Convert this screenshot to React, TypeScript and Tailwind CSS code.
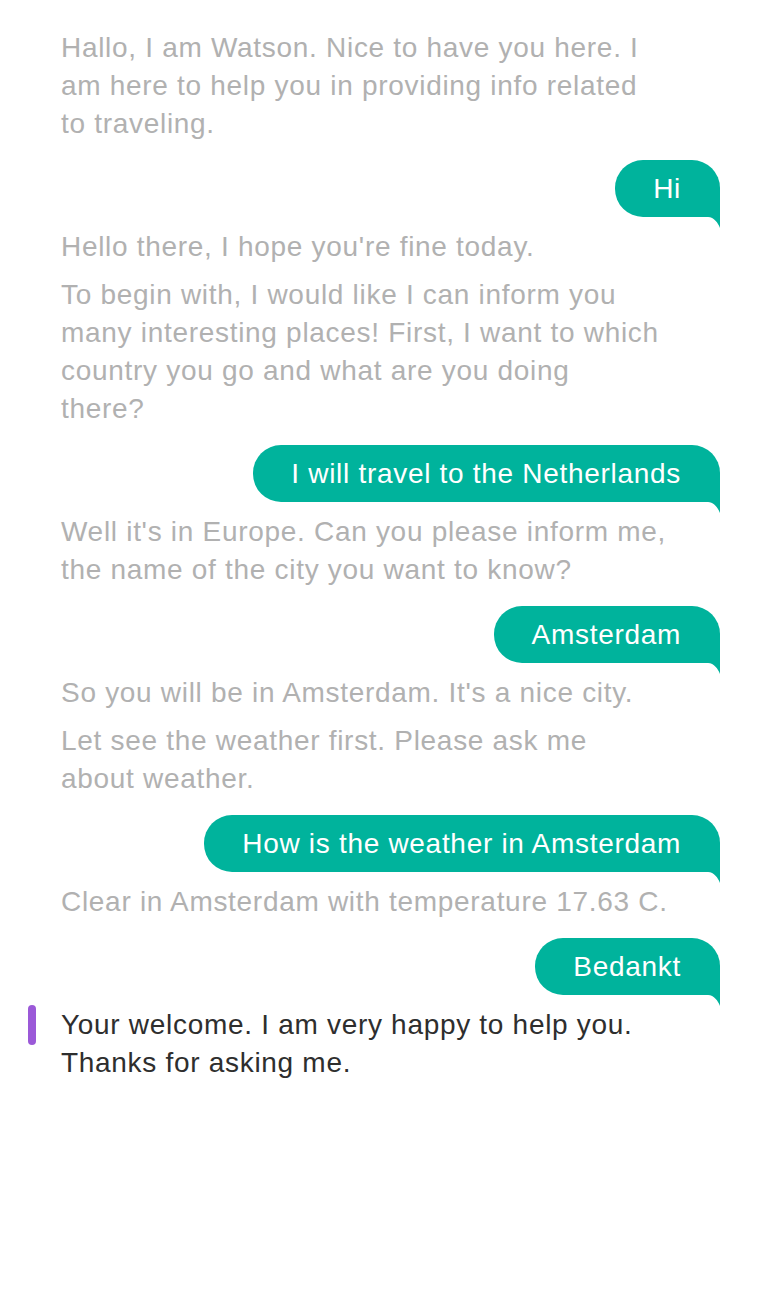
import * as React from "react";

type Msg = { from: "bot" | "user"; lines: string[]; active?: boolean };

const messages: Msg[] = [
  { from: "bot", lines: ["Hallo, I am Watson. Nice to have you here. I", "am here to help you in providing info related", "to traveling."] },
  { from: "user", lines: ["Hi"] },
  { from: "bot", lines: ["Hello there, I hope you're fine today."] },
  { from: "bot", lines: ["To begin with, I would like I can inform you", "many interesting places! First, I want to which", "country you go and what are you doing", "there?"] },
  { from: "user", lines: ["I will travel to the Netherlands"] },
  { from: "bot", lines: ["Well it's in Europe. Can you please inform me,", "the name of the city you want to know?"] },
  { from: "user", lines: ["Amsterdam"] },
  { from: "bot", lines: ["So you will be in Amsterdam. It's a nice city."] },
  { from: "bot", lines: ["Let see the weather first. Please ask me", "about weather."] },
  { from: "user", lines: ["How is the weather in Amsterdam"] },
  { from: "bot", lines: ["Clear in Amsterdam with temperature 17.63 C."] },
  { from: "user", lines: ["Bedankt"] },
  { from: "bot", lines: ["Your welcome. I am very happy to help you.", "Thanks for asking me."], active: true },
];

function UserBubble({ text }: { text: string }) {
  return (
    <div className="mt-[17px] flex justify-end">
      <div className="flex flex-col items-end">
        <div className="flex h-[57px] items-center rounded-t-[28px] rounded-bl-[28px] rounded-br-none bg-[#00b39c] pl-[38px] pr-[39px] text-[28px] leading-none tracking-[0.7px] text-white">
          {text}
        </div>
        <svg width="12" height="11" viewBox="0 0 12 11" className="block">
          <path d="M0 0 H12 V11 C10 6 6 0 0 0 Z" fill="#00b39c" />
        </svg>
      </div>
    </div>
  );
}

function BotText({ lines, active, first }: { lines: string[]; active?: boolean; first?: boolean }) {
  return (
    <div className={"relative pr-[40px] " + (first ? "" : "mt-[10px]")}>
      {active && (
        <div className="absolute left-[-33px] top-[-1px] h-[40px] w-[8px] rounded-full bg-[#9b59d8]" />
      )}
      <p
        className={
          "whitespace-nowrap text-[28px] leading-[38px] tracking-[0.7px] " +
          (active ? "text-[#2e2e2e]" : "text-[#b1b1b1]")
        }
      >
        {lines.map((l, i) => (
          <React.Fragment key={i}>
            {i > 0 && <br />}
            {l}
          </React.Fragment>
        ))}
      </p>
    </div>
  );
}

export default function App() {
  return (
    <div
      className="min-h-[1290px] w-[758px] bg-white pl-[61px] pr-[38px] pt-[29px]"
      style={{ fontFamily: '"Liberation Sans", Arial, sans-serif' }}
    >
      <div className="flex flex-col">
        {messages.map((m, i) =>
          m.from === "user" ? (
            <UserBubble key={i} text={m.lines[0]} />
          ) : (
            <BotText
              key={i}
              lines={m.lines}
              active={m.active}
              first={i === 0 || messages[i - 1].from === "user"}
            />
          )
        )}
      </div>
    </div>
  );
}
